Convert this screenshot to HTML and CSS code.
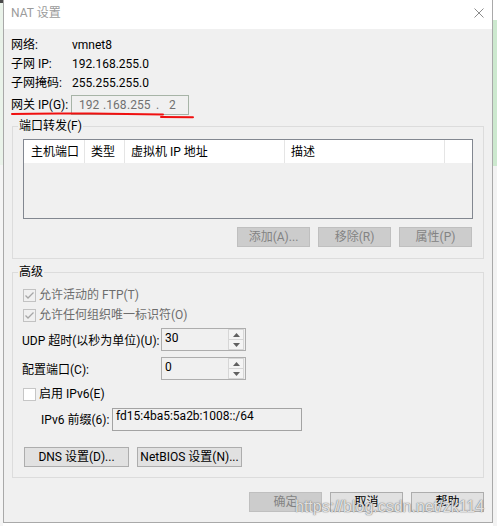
FILE: index.html
```html
<!DOCTYPE html>
<html lang="zh-CN">
<head>
<meta charset="utf-8">
<title>NAT 设置</title>
<link rel="stylesheet" href="styles.css">
</head>
<body>
<div class="screen">
  <div class="edge edge-left"></div>
  <div class="dialog">
    <div class="titlebar">
      <span class="title">NAT 设置</span>
      <svg class="close" width="10" height="10" viewBox="0 0 10 10"><path d="M0.5 0.5 L9.5 9.5 M9.5 0.5 L0.5 9.5" stroke="#8c8c8c" stroke-width="1" fill="none"/></svg>
    </div>
    <div class="content">
      <div class="info-row"><span class="lbl">网络:</span><span class="val">vmnet8</span></div>
      <div class="info-row"><span class="lbl">子网 IP:</span><span class="val">192.168.255.0</span></div>
      <div class="info-row"><span class="lbl">子网掩码:</span><span class="val">255.255.255.0</span></div>
      <div class="gw-row">
        <span class="gw-lbl">网关 IP(G):</span>
        <div class="ipbox"><span class="ipa">192</span><span class="ipb">.168</span><span class="ipc">.255</span><span class="ipd">.</span><span>2</span></div>
      </div>

      <fieldset class="group g1">
        <legend>端口转发(F)</legend>
        <div class="list">
          <div class="list-head">
            <div class="col c1">主机端口</div>
            <div class="col c2">类型</div>
            <div class="col c3">虚拟机 IP 地址</div>
            <div class="col c4">描述</div>
            <div class="col c5"></div>
          </div>
          <div class="list-body"></div>
        </div>
        <div class="btn-row">
          <button class="btn disabled">添加(A)...</button>
          <button class="btn disabled">移除(R)</button>
          <button class="btn disabled">属性(P)</button>
        </div>
      </fieldset>

      <fieldset class="group g2">
        <legend>高级</legend>
        <div class="check-row disabled first">
          <span class="cb"><svg width="11" height="11" viewBox="0 0 11 11"><path d="M1.5 5.5 L4 8 L9.5 2.5" stroke="#a6a6a6" stroke-width="1.3" fill="none"/></svg></span>
          <span class="cb-text">允许活动的 FTP(T)</span>
        </div>
        <div class="check-row disabled">
          <span class="cb"><svg width="11" height="11" viewBox="0 0 11 11"><path d="M1.5 5.5 L4 8 L9.5 2.5" stroke="#a6a6a6" stroke-width="1.3" fill="none"/></svg></span>
          <span class="cb-text">允许任何组织唯一标识符(O)</span>
        </div>
        <div class="spin-row udp">
          <span class="spin-lbl">UDP 超时(以秒为单位)(U):</span>
          <div class="spin">
            <span class="spin-val">30</span>
            <div class="spin-btns">
              <span class="sb"><svg width="7" height="4" viewBox="0 0 7 4"><path d="M0 4 L3.5 0 L7 4Z" fill="#606060"/></svg></span>
              <span class="sb"><svg width="7" height="4" viewBox="0 0 7 4"><path d="M0 0 L3.5 4 L7 0Z" fill="#606060"/></svg></span>
            </div>
          </div>
        </div>
        <div class="spin-row cfg">
          <span class="spin-lbl">配置端口(C):</span>
          <div class="spin">
            <span class="spin-val">0</span>
            <div class="spin-btns">
              <span class="sb"><svg width="7" height="4" viewBox="0 0 7 4"><path d="M0 4 L3.5 0 L7 4Z" fill="#606060"/></svg></span>
              <span class="sb"><svg width="7" height="4" viewBox="0 0 7 4"><path d="M0 0 L3.5 4 L7 0Z" fill="#606060"/></svg></span>
            </div>
          </div>
        </div>
        <div class="check-row ipv6">
          <span class="cb empty"></span>
          <span class="cb-text">启用 IPv6(E)</span>
        </div>
        <div class="v6-row">
          <span class="v6-lbl">IPv6 前缀(6):</span>
          <div class="v6-box">fd15:4ba5:5a2b:1008::/64</div>
        </div>
        <div class="dns-row">
          <button class="btn wide">DNS 设置(D)...</button>
          <button class="btn wide">NetBIOS 设置(N)...</button>
        </div>
      </fieldset>

      <div class="footer">
        <button class="btn disabled">确定</button>
        <button class="btn">取消</button>
        <button class="btn">帮助</button>
      </div>
    </div>
  </div>
  <div class="edge edge-right"></div>

  <svg class="annot" width="497" height="526" viewBox="0 0 497 526">
    <path d="M12 114 Q40 113.2 90 113.6 T163 114.4" stroke="#f01010" stroke-width="2" fill="none" stroke-linecap="round"/>
    <path d="M161 117 L193 117.3" stroke="#f01010" stroke-width="2" fill="none" stroke-linecap="round"/>
  </svg>
  <div class="watermark">https://blog.csdn.net/zk114</div>
</div>
</body>
</html>
```

FILE: styles.css
```css
* { box-sizing: border-box; }
html, body { margin: 0; padding: 0; }
body {
  width: 497px;
  height: 526px;
  overflow: hidden;
  background: #ffffff;
  font-family: "Microsoft YaHei UI", Roboto, "Noto Sans CJK SC", sans-serif;
  font-size: 12px;
  line-height: 16px;
  color: #000;
}
.screen {
  position: relative;
  display: flex;
  width: 497px;
  height: 526px;
}
.edge-left {
  width: 3px;
  height: 526px;
  background: linear-gradient(#4a4a4a 0 3px, #eaf3ea 3px 165px, #f5f5f5 165px);
}
.edge-right {
  width: 4px;
  height: 526px;
  background: linear-gradient(#ffffff 0 20px, #cde9cf 20px 166px, #f3f3f3 166px);
}
.dialog {
  width: 490px;
  height: 523px;
  border: 1px solid #a9a9a9;
  border-top: 0;
  background: #f0f0f0;
  display: flex;
  flex-direction: column;
}
.titlebar {
  height: 29px;
  flex: none;
  background: #ffffff;
  display: flex;
  justify-content: space-between;
  align-items: flex-start;
  padding: 5px 8px 0 7px;
}
.title { color: #9b9b9b; }
.close { margin-top: 3px; }

.content { padding: 6px 8px 0 7px; }

.info-row {
  display: flex;
  align-items: center;
  height: 19px;
}
.lbl { width: 61px; }

.gw-row {
  display: flex;
  align-items: center;
  height: 20px;
  margin-top: 3px;
}
.gw-lbl { width: 60px; }
.ipbox {
  width: 118px;
  height: 20px;
  border: 1px solid #a7b4a7;
  background: #f0f0f0;
  color: #707070;
  display: flex;
  align-items: center;
  padding-left: 7px;
  white-space: pre;
}
.ipa { width: 24px; }
.ipb { width: 24px; }
.ipc { width: 29px; }
.ipd { width: 13px; }

.group {
  margin: 0 0 0 1px;
  padding: 0;
  border: 1px solid #dcdcdc;
  min-width: 0;
}
.group legend {
  padding: 0 1px;
  margin-left: 5px;
  line-height: 16px;
}
.g1 { margin-top: 3px; padding-bottom: 11px; }
.g2 { margin-top: 5px; padding-bottom: 10px; }

.list {
  margin: 5px 0 0 10px;
  width: 450px;
  height: 80px;
  border: 1px solid #828790;
  display: flex;
  flex-direction: column;
}
.list-head {
  display: flex;
  height: 23px;
  background: #ffffff;
  flex: none;
}
.col {
  height: 23px;
  padding: 4px 0 0 6px;
  border-right: 1px solid #e5e5e5;
  white-space: nowrap;
}
.c1 { width: 61px; padding-left: 7px; }
.c2 { width: 40px; }
.c3 { width: 160px; }
.c4 { width: 160px; }
.c5 { width: 27px; border-right: 0; }
.list-body { flex: 1; background: #f0f0f0; }

.btn-row {
  margin: 8px 0 0 10px;
  width: 449px;
  display: flex;
  justify-content: flex-end;
  gap: 8px;
}
.btn {
  width: 73px;
  height: 20px;
  padding: 0;
  margin: 0;
  font: inherit;
  line-height: 16px;
  color: #000;
  background: #e1e1e1;
  border: 1px solid #adadad;
  border-radius: 0;
  white-space: nowrap;
}
.btn.disabled {
  background: #cccccc;
  border-color: #bfbfbf;
  color: #838383;
}
.btn.wide { width: 105px; }

.check-row {
  display: flex;
  align-items: center;
  height: 20px;
  padding-left: 10px;
}
.check-row.first { margin-top: 5px; }
.check-row.ipv6 { margin-top: 4px; }
.check-row.disabled .cb-text { color: #6d6d6d; }
.cb {
  width: 13px;
  height: 13px;
  border: 1px solid #c2c2c2;
  background: #f0f0f0;
  display: flex;
  margin-right: 3px;
}
.cb.empty { background: #ffffff; border-color: #c6c6c6; }

.spin-row {
  display: flex;
  align-items: center;
  height: 23px;
  padding-left: 9px;
}
.spin-row.udp { margin-top: 3px; }
.spin-row.cfg { margin-top: 6px; }
.spin-lbl { width: 139px; padding-top: 2px; }
.spin {
  width: 85px;
  height: 23px;
  border: 1px solid #adadad;
  background: #f0f0f0;
  display: flex;
}
.spin-val { flex: 1; padding: 1px 0 0 3px; }
.spin-btns {
  width: 16px;
  margin-right: 1px;
  display: flex;
  flex-direction: column;
}
.sb {
  flex: 1;
  border: 1px solid #d6d6d6;
  background: #f4f4f4;
  display: flex;
  align-items: center;
  justify-content: center;
}
.sb + .sb { border-top: 0; }

.v6-row {
  display: flex;
  align-items: center;
  height: 23px;
  margin-top: 4px;
  padding-left: 28px;
}
.v6-lbl { width: 71px; }
.v6-box {
  width: 190px;
  height: 23px;
  border: 1px solid #a3a3a3;
  background: #f0f0f0;
  padding: 0 0 0 3px;
  line-height: 15px;
}

.dns-row {
  display: flex;
  gap: 8px;
  margin-top: 16px;
  padding-left: 11px;
}

.footer {
  display: flex;
  justify-content: flex-end;
  gap: 8px;
  margin-top: 14px;
}

.annot {
  position: absolute;
  left: 0;
  top: 0;
  pointer-events: none;
}
.watermark {
  position: absolute;
  left: 295px;
  top: 498px;
  font-family: "Liberation Sans", Arial, sans-serif;
  font-size: 16px;
  line-height: 18px;
  color: rgba(255, 255, 255, 0.8);
  text-shadow: 0 0 1px rgba(100, 100, 100, 0.8), 0 0 1px rgba(100, 100, 100, 0.6), 0 0 2px rgba(140, 140, 140, 0.4);
  white-space: nowrap;
  pointer-events: none;
}
```
